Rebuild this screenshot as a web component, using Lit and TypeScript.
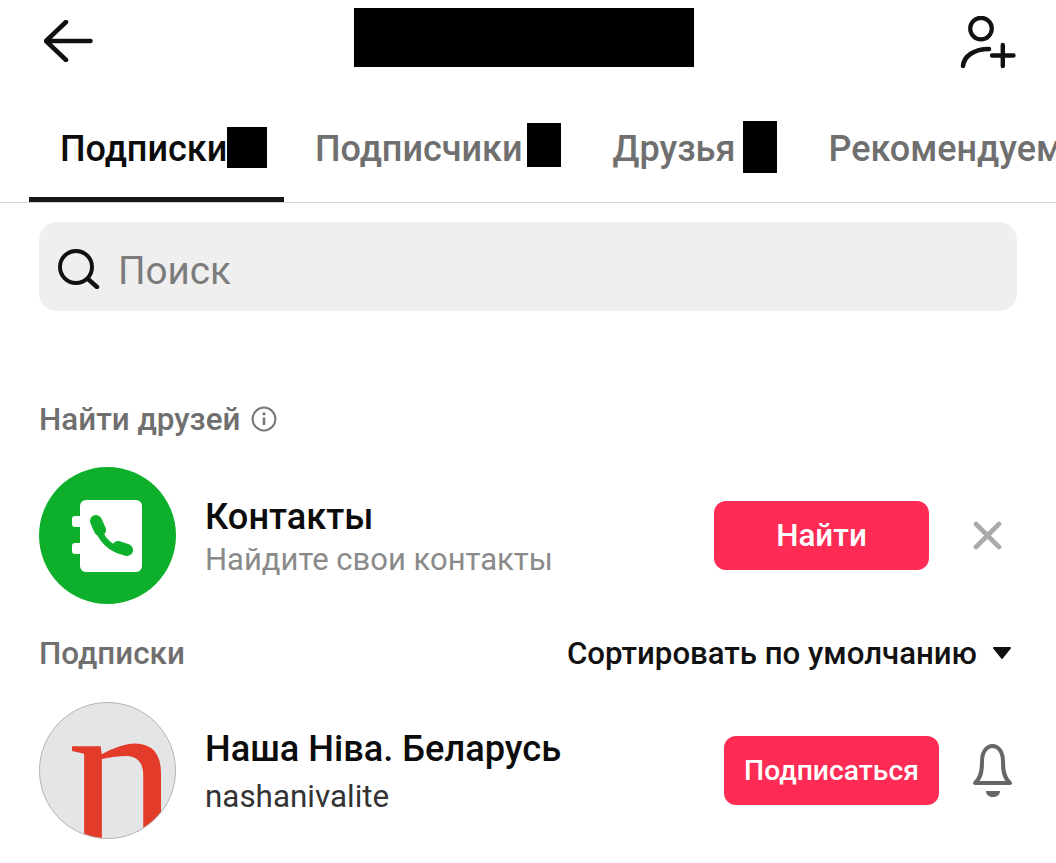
import { LitElement, html, css, svg } from "lit";
import { customElement } from "lit/decorators.js";

const backIcon = svg`<path d="M46.5 21H2M22 2 2 21l20 19" fill="none" stroke="#111" stroke-width="4.5" stroke-linecap="round" stroke-linejoin="round"/>`;
const personIcon = svg`
  <circle cx="23" cy="12.6" r="10.8" fill="none" stroke="#111" stroke-width="4.2"/>
  <path d="M5 50C6 40 16 33 31 33" fill="none" stroke="#111" stroke-width="4.6" stroke-linecap="round"/>
  <path d="M34 39.5H55.5M44.8 29V50" fill="none" stroke="#111" stroke-width="4.4" stroke-linecap="round"/>`;
const searchIcon = svg`
  <circle cx="18" cy="22" r="16" fill="none" stroke="#111" stroke-width="4"/>
  <path d="M30 34 39 42" fill="none" stroke="#111" stroke-width="4.4" stroke-linecap="round"/>`;
const infoIcon = svg`
  <circle cx="13" cy="13" r="11.4" fill="none" stroke="#777" stroke-width="2"/>
  <circle cx="13" cy="7.8" r="1.6" fill="#777"/>
  <path d="M13 11.5V19" stroke="#777" stroke-width="2.6"/>`;
const contactsIcon = svg`
  <circle cx="68.5" cy="68.5" r="68.5" fill="#0eb02b"/>
  <rect x="41" y="33" width="62" height="72" rx="6" fill="#fff"/>
  <rect x="33" y="49" width="14" height="11" rx="3" fill="#fff"/>
  <rect x="33" y="76" width="14" height="11" rx="3" fill="#fff"/>
  <path d="M59 58C60 71 72 83 85 84" fill="none" stroke="#0eb02b" stroke-width="6.5"/>
  <path d="M57 54 61 63M79 80 88 83" fill="none" stroke="#0eb02b" stroke-width="12" stroke-linecap="round"/>`;
const closeIcon = svg`<path d="M3 3 26 26M26 3 3 26" fill="none" stroke="#aaa" stroke-width="4.6" stroke-linecap="round"/>`;
const caretIcon = svg`<path d="M2 2H18L10 12Z" fill="#111" stroke="#111" stroke-width="2" stroke-linejoin="round"/>`;
const bellIcon = svg`
  <path d="M3 40C9 35 10 28 10 19 10 8 15 3 20.5 3 26 3 31 8 31 19 31 28 32 35 38 40Z" fill="none" stroke="#666" stroke-width="4" stroke-linejoin="round"/>
  <path d="M14 48H28C28 56 14 56 14 48Z" fill="#666"/>`;

@customElement("app-root")
export class AppRoot extends LitElement {
  static styles = css`
    :host {
      display: block;
      width: 1056px;
      height: 863px;
      overflow: hidden;
      background: #fff;
      font-family: Roboto, "Liberation Sans", sans-serif;
      color: #111;
    }
    svg {
      display: block;
      flex: none;
    }
    .header {
      display: flex;
      align-items: flex-start;
      height: 100px;
      padding: 8px 40px 0 44px;
      box-sizing: border-box;
    }
    .back {
      width: 50px;
      height: 42px;
      margin-top: 12px;
    }
    .title {
      width: 340px;
      height: 59px;
      margin-left: 260px;
      background: #000;
    }
    .add {
      width: 58px;
      height: 56px;
      margin-left: auto;
      margin-top: 8px;
    }
    .tabs {
      display: flex;
      height: 103px;
      box-sizing: border-box;
      padding-left: 29px;
      border-bottom: 1px solid #d4d4d4;
      overflow: hidden;
      white-space: nowrap;
    }
    .tab {
      display: flex;
      flex: none;
      height: 102px;
      box-sizing: border-box;
      padding: 25px 21px 0 31px;
      font-size: 36px;
      font-weight: 500;
      line-height: 48px;
      color: #6f6f6f;
    }
    .tab.active {
      width: 255px;
      padding-right: 0;
      color: #0c0c0c;
      border-bottom: 5px solid #161616;
    }
    .redact {
      flex: none;
      background: #000;
    }
    .r1 {
      width: 40px;
      height: 41px;
      margin-top: 2px;
    }
    .r2 {
      width: 34px;
      height: 44px;
      margin-left: 4px;
      margin-top: -2px;
    }
    .r3 {
      width: 34px;
      height: 52px;
      margin: -4px -1px 0 8px;
    }
    .search {
      display: flex;
      align-items: center;
      gap: 18px;
      height: 89px;
      margin: 19px 39px 0;
      padding-left: 19px;
      box-sizing: border-box;
      background: #efefef;
      border-radius: 18px;
      font-size: 38.6px;
      color: #7c7c7c;
    }
    .search svg {
      width: 42px;
      height: 44px;
    }
    .search span {
      padding-top: 7px;
    }
    .section {
      display: flex;
      align-items: center;
      height: 40px;
      box-sizing: border-box;
      padding-bottom: 2px;
      margin: 89px 44px 0 39px;
      font-size: 31.4px;
      font-weight: 500;
      color: #6f6f6f;
    }
    .section.second {
      margin-top: 30px;
    }
    .info {
      width: 26px;
      height: 26px;
      margin-left: 11px;
    }
    .sort {
      display: flex;
      align-items: center;
      gap: 15px;
      margin-left: auto;
      font-size: 31.2px;
      color: #111;
    }
    .caret {
      width: 20px;
      height: 14px;
    }
    .row {
      display: flex;
      align-items: center;
      height: 137px;
      margin-top: 27px;
      padding-left: 39px;
    }
    .row.second {
      margin-top: 28px;
    }
    .avatar {
      width: 137px;
      height: 137px;
      flex: none;
    }
    .logo {
      position: relative;
      box-sizing: border-box;
      border: 1px solid #b4b4b4;
      border-radius: 50%;
      overflow: hidden;
      background: #e3e5e7;
    }
    .logo span {
      position: absolute;
      left: 27px;
      top: 3px;
      font-family: "Liberation Serif", serif;
      font-size: 219px;
      line-height: 135px;
      color: #e23b2a;
    }
    .info-block {
      margin-left: 29px;
      margin-top: 4px;
    }
    .name {
      font-size: 36.2px;
      font-weight: 500;
      line-height: 44px;
      color: #0c0c0c;
    }
    .sub {
      font-size: 31px;
      line-height: 42px;
      color: #8a8a8a;
    }
    .handle {
      margin-top: 5px;
      font-size: 31.4px;
      color: #333;
    }
    .btn {
      display: flex;
      align-items: center;
      justify-content: center;
      width: 215px;
      height: 69px;
      margin-left: auto;
      flex: none;
      background: #fe2c55;
      border-radius: 12px;
      font-size: 31.4px;
      font-weight: 500;
      color: #fff;
    }
    .btn.small {
      font-size: 28.3px;
    }
    .close {
      width: 29px;
      height: 29px;
      margin: 0 54px 0 44px;
    }
    .bell {
      width: 42px;
      height: 56px;
      margin: 0 42px 0 33px;
    }
  `;

  render() {
    return html`
      <div class="header">
        <svg class="back" viewBox="0 0 50 42">${backIcon}</svg>
        <div class="title"></div>
        <svg class="add" viewBox="0 0 58 56">${personIcon}</svg>
      </div>
      <div class="tabs">
        <div class="tab active">Подписки<span class="redact r1"></span></div>
        <div class="tab">Подписчики<span class="redact r2"></span></div>
        <div class="tab">Друзья<span class="redact r3"></span></div>
        <div class="tab">Рекомендуемые</div>
      </div>
      <div class="search">
        <svg viewBox="0 0 42 44">${searchIcon}</svg>
        <span>Поиск</span>
      </div>
      <div class="section">
        Найти друзей
        <svg class="info" viewBox="0 0 26 26">${infoIcon}</svg>
      </div>
      <div class="row">
        <svg class="avatar" viewBox="0 0 137 137">${contactsIcon}</svg>
        <div class="info-block">
          <div class="name">Контакты</div>
          <div class="sub">Найдите свои контакты</div>
        </div>
        <div class="btn">Найти</div>
        <svg class="close" viewBox="0 0 29 29">${closeIcon}</svg>
      </div>
      <div class="section second">
        Подписки
        <div class="sort">
          Сортировать по умолчанию
          <svg class="caret" viewBox="0 0 20 14">${caretIcon}</svg>
        </div>
      </div>
      <div class="row second">
        <div class="avatar logo"><span>n</span></div>
        <div class="info-block">
          <div class="name">Наша Ніва. Беларусь</div>
          <div class="sub handle">nashanivalite</div>
        </div>
        <div class="btn small">Подписаться</div>
        <svg class="bell" viewBox="0 0 42 56">${bellIcon}</svg>
      </div>
    `;
  }
}
